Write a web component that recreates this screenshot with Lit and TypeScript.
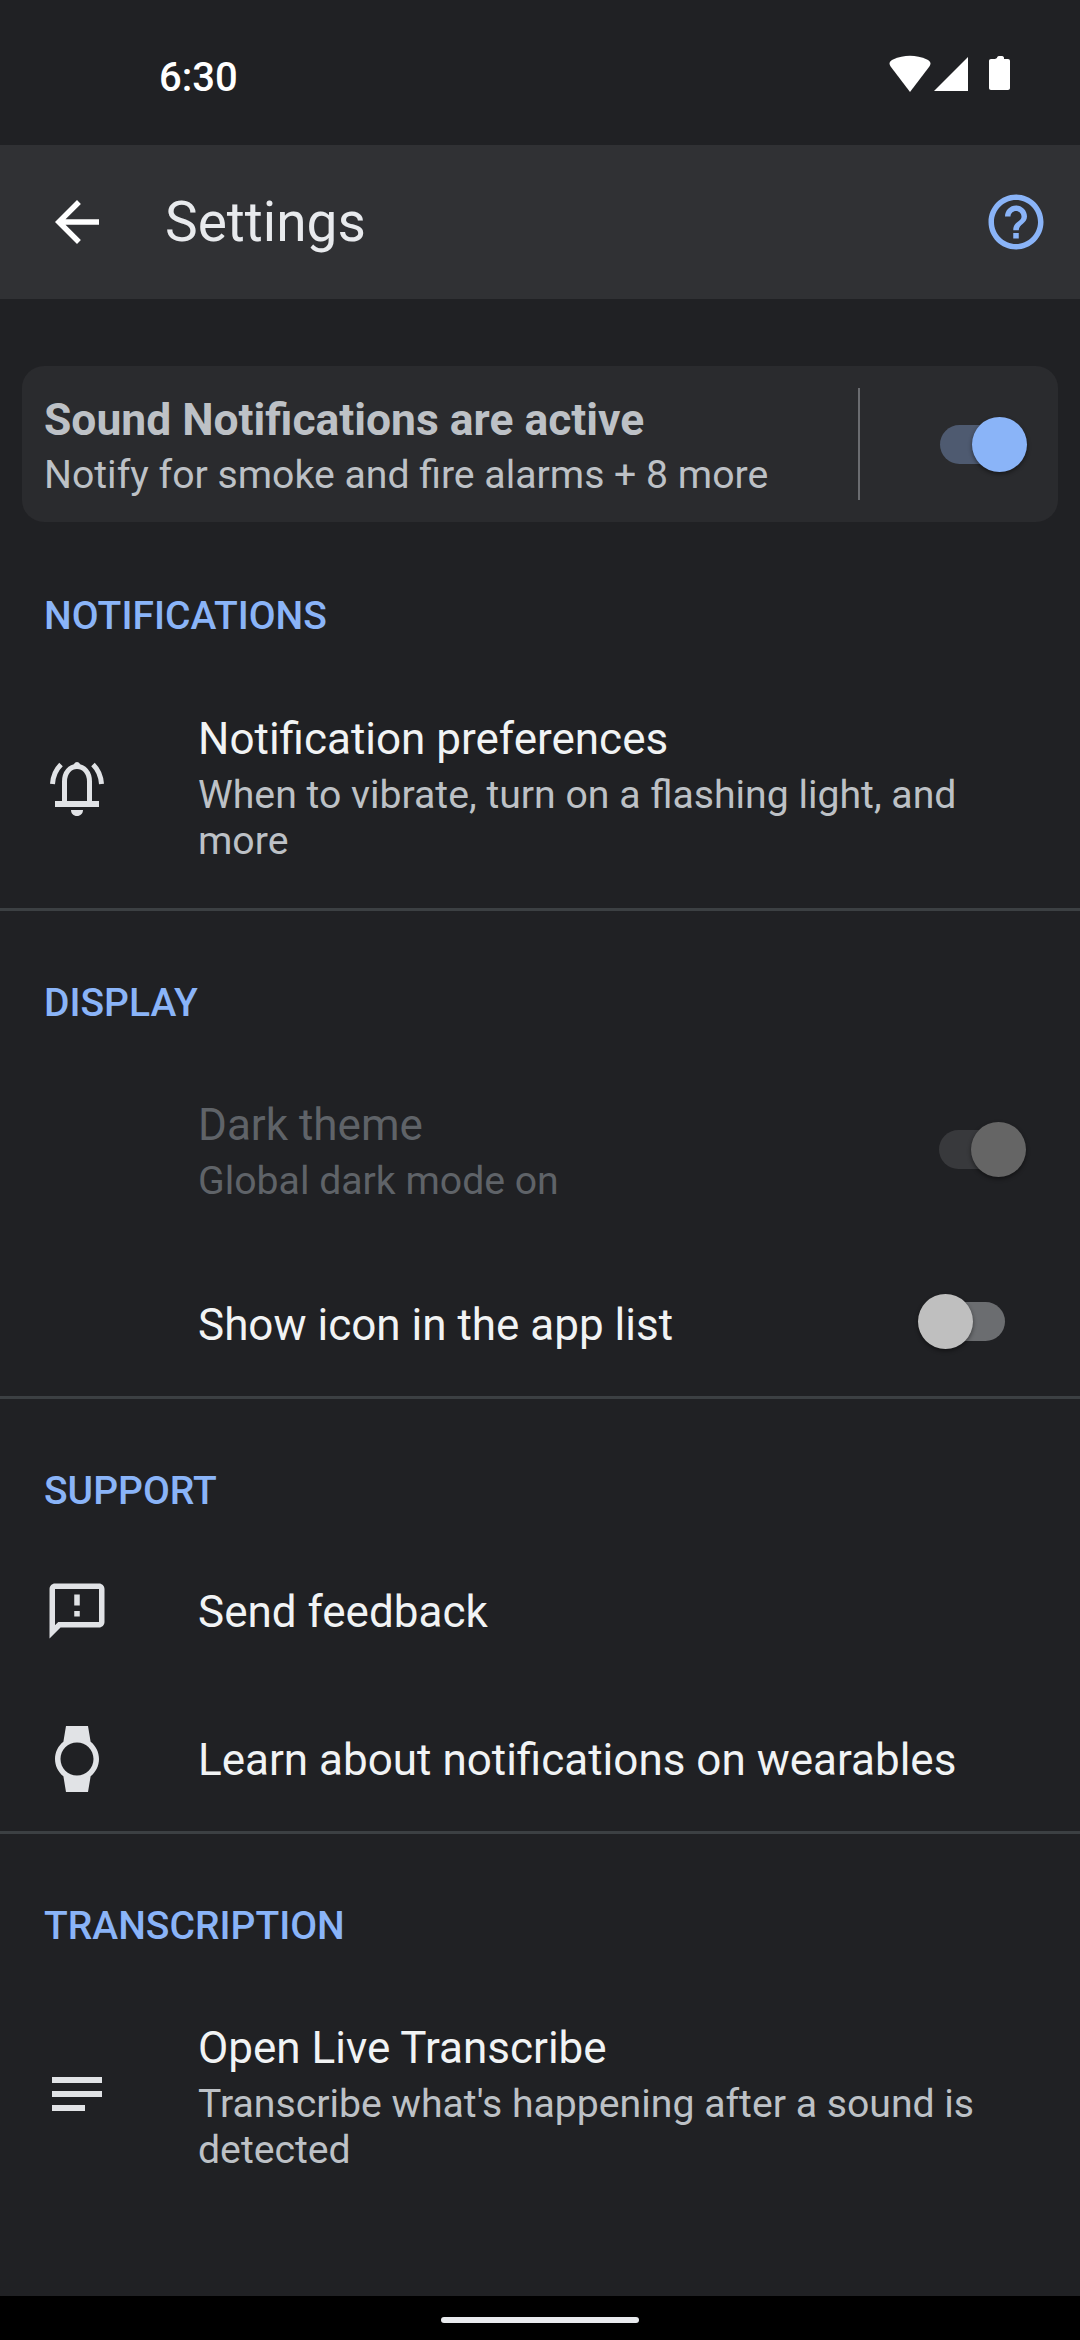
import { css, html, LitElement, svg } from "lit";
import { customElement, property } from "lit/decorators.js";

@customElement("app-toggle")
export class AppToggle extends LitElement {
  @property({ type: String }) mode = "on";

  render() {
    return html`<div class="toggle ${this.mode}">
      <div class="track"></div>
      <div class="thumb"></div>
    </div>`;
  }

  static styles = css`
    :host {
      display: block;
      flex: none;
    }
    .toggle {
      position: relative;
      width: 87px;
      height: 55px;
    }
    .track {
      position: absolute;
      top: 8px;
      width: 72px;
      height: 39px;
      border-radius: 20px;
    }
    .thumb {
      position: absolute;
      top: 0;
      width: 55px;
      height: 55px;
      border-radius: 50%;
      box-shadow: 0 2px 4px rgba(0, 0, 0, 0.45);
    }
    .on .track {
      left: 0;
      background: #4e5a70;
    }
    .on .thumb {
      right: 0;
      background: #8ab4f8;
    }
    .disabled .track {
      left: 0;
      background: #38393c;
    }
    .disabled .thumb {
      right: 0;
      background: #656565;
    }
    .off .track {
      right: 0;
      background: #6b6d70;
    }
    .off .thumb {
      left: 0;
      background: #bfbfbf;
    }
  `;
}

const bell = svg`<g fill="none" stroke="#e1e3e6" stroke-width="5">
    <path d="M44.5 68V48.5c0-9 5.5-15 12.5-15s12.5 6 12.5 15V68" />
    <path d="M35 71h44" stroke-width="6" />
    <path d="M32.5 51c.5-8 3.500-14.500 8.500-19.500" />
    <path d="M81.500 51c-.5-8-3.500-14.500-8.500-19.500" />
  </g>
  <path fill="#e1e3e6" d="M53.500 33.500c0-2.500 1.500-4.500 3.500-4.500s3.500 2 3.500 4.500zM51 77h12c0 3.500-2.500 6-6 6s-6-2.500-6-6z" />`;

const feedback = svg`<path fill="#e1e3e6" transform="scale(2.75)" d="M20 2H4c-1.100 0-1.990.9-1.990 2L2 22l4-4h14c1.100 0 2-.9 2-2V4c0-1.100-.9-2-2-2zm0 14H5.170L4 17.170V4h16v12zM11 12h2v2h-2zm0-6h2v4h-2z" />`;

const watch = svg`<path fill="#e1e3e6" transform="scale(2.75)" d="M20 12c0-2.540-1.190-4.810-3.040-6.270L16 0H8l-.95 5.730C5.190 7.190 4 9.450 4 12s1.190 4.810 3.050 6.270L8 24h8l.96-5.730C18.810 16.810 20 14.540 20 12zM6 12c0-3.310 2.690-6 6-6s6 2.690 6 6-2.690 6-6 6-6-2.690-6-6z" />`;

const lines = svg`<g fill="#e1e3e6">
    <rect x="8" y="13" width="50" height="6" />
    <rect x="8" y="27" width="50" height="6" />
    <rect x="8" y="41" width="33" height="6" />
  </g>`;

@customElement("app-root")
export class AppRoot extends LitElement {
  private icon(content: unknown, box = "0 0 66 66") {
    return html`<svg class="icon" viewBox=${box}>${content}</svg>`;
  }

  render() {
    return html`
      <div class="status">
        <span class="time">6:30</span>
        <svg class="status-icons" viewBox="0 0 124 40">
          <path fill="#fff" d="M21 37 L2 12 C-1 8 1 6 4 4.500 C15 -0.500 27 -0.500 38 4.500 C41 6 43 8 40 12 Z" />
          <path fill="#fff" d="M79 2 V36 H45 Z" />
          <path fill="#fff" d="M106 4 c0-1 .6-2 2-2 h3 c1.400 0 2 1 2 2 v1 h4 c1.200 0 2 .8 2 2 v27 c0 1.200-.8 2-2 2 h-17 c-1.200 0-2-.8-2-2 V7 c0-1.200 .8-2 2-2 h4 z" transform="translate(2 -1)" />
        </svg>
      </div>
      <div class="toolbar">
        <svg class="icon" viewBox="0 0 24 24">
          <path fill="#fff" d="M20 11H7.830l5.590-5.590L12 4l-8 8 8 8 1.410-1.410L7.830 13H20v-2z" />
        </svg>
        <span class="page-title">Settings</span>
        <svg class="icon help" viewBox="0 0 24 24">
          <path fill="#8ab4f8" d="M11 18h2v-2h-2v2zm1-16C6.480 2 2 6.480 2 12s4.480 10 10 10 10-4.480 10-10S17.520 2 12 2zm0 18c-4.410 0-8-3.590-8-8s3.590-8 8-8 8 3.590 8 8-3.590 8-8 8zm0-14c-2.210 0-4 1.790-4 4h2c0-1.100.9-2 2-2s2 .9 2 2c0 2-3 1.750-3 5h2c0-2.250 3-2.500 3-5 0-2.210-1.790-4-4-4z" />
        </svg>
      </div>

      <div class="main">
        <div class="card">
          <div class="card-text">
            <div class="card-title">Sound Notifications are active</div>
            <div class="summary">Notify for smoke and fire alarms + 8 more</div>
          </div>
          <div class="card-divider"></div>
          <app-toggle mode="on"></app-toggle>
        </div>

        <div class="section notifications">
          <div class="head">NOTIFICATIONS</div>
          <div class="row tall">
            ${this.icon(bell, "24 22 66 66")}
            <div class="text">
              <div class="title">Notification preferences</div>
              <div class="summary">When to vibrate, turn on a flashing light, and<br />more</div>
            </div>
          </div>
        </div>

        <div class="section display">
          <div class="head">DISPLAY</div>
          <div class="row dark">
            <div class="icon"></div>
            <div class="text">
              <div class="title muted">Dark theme</div>
              <div class="summary muted">Global dark mode on</div>
            </div>
            <app-toggle class="toggle-on" mode="disabled"></app-toggle>
          </div>
          <div class="row list">
            <div class="icon"></div>
            <div class="text"><div class="title">Show icon in the app list</div></div>
            <app-toggle class="toggle-off" mode="off"></app-toggle>
          </div>
        </div>

        <div class="section support">
          <div class="head">SUPPORT</div>
          <div class="row link">
            <svg class="icon" viewBox="0 0 66 66">${feedback}</svg>
            <div class="text"><div class="title">Send feedback</div></div>
          </div>
          <div class="row link">
            <svg class="icon" viewBox="0 0 66 66">${watch}</svg>
            <div class="text"><div class="title">Learn about notifications on wearables</div></div>
          </div>
        </div>

        <div class="section transcription">
          <div class="head">TRANSCRIPTION</div>
          <div class="row live">
            ${this.icon(lines)}
            <div class="text">
              <div class="title">Open Live Transcribe</div>
              <div class="summary">Transcribe what's happening after a sound is<br />detected</div>
            </div>
          </div>
        </div>
      </div>

      <div class="nav"><div class="home"></div></div>
    `;
  }

  static styles = css`
    :host {
      display: flex;
      flex-direction: column;
      height: 2340px;
      background: #202124;
      font-family: Roboto, "Noto Sans", sans-serif;
      color: #fff;
    }
    .status {
      height: 145px;
      flex: none;
      display: flex;
      align-items: center;
      justify-content: space-between;
      padding: 0 71px 0 159px;
      box-sizing: border-box;
    }
    .time {
      font-size: 40px;
      font-weight: 500;
      line-height: 42px;
      margin-top: 11px;
    }
    .status-icons {
      width: 124px;
      height: 40px;
      margin-top: 5px;
      margin-right: -4px;
    }
    .toolbar {
      height: 154px;
      flex: none;
      display: flex;
      align-items: center;
      padding: 0 33px 0 44px;
      background: #303134;
    }
    .icon {
      width: 66px;
      height: 66px;
      flex: none;
    }
    .help {
      margin-right: -2px;
    }
    .page-title {
      flex: 1;
      margin-left: 55px;
      font-size: 55px;
      color: #e8eaed;
    }
    .main {
      flex: 1;
    }
    .card {
      display: flex;
      align-items: center;
      height: 156px;
      margin: 67px 22px 0;
      padding: 0 31px 0 22px;
      box-sizing: border-box;
      border-radius: 22px;
      background: #2a2b2e;
    }
    .card-text {
      flex: 1;
      padding-top: 4px;
    }
    .card-title {
      font-size: 44.4px;
      line-height: 52px;
      font-weight: 700;
      color: #bdc1c6;
    }
    .card-divider {
      width: 2px;
      height: 112px;
      margin-right: 80px;
      background: #6a6c70;
    }
    .section {
      border-bottom: 3px solid #3c4043;
    }
    .section.notifications {
      padding-top: 61px;
    }
    .section.display,
    .section.support,
    .section.transcription {
      padding-top: 59px;
    }
    .section.transcription {
      border-bottom: none;
    }
    .head {
      display: flex;
      align-items: center;
      height: 66px;
      padding-left: 44px;
      font-size: 39px;
      font-weight: 500;
      color: #8ab4f8;
    }
    .row {
      display: flex;
      align-items: center;
      padding-left: 44px;
      gap: 89px;
    }
    .row.tall {
      padding-top: 62px;
      padding-bottom: 44px;
    }
    .row.dark {
      padding-top: 61px;
    }
    .row.dark app-toggle {
      margin-top: -3px;
    }
    .row.list {
      padding-top: 88px;
      padding-bottom: 38px;
    }
    .row.list app-toggle {
      margin-top: -8px;
    }
    .row.link {
      height: 148px;
      box-sizing: border-box;
    }
    .row.link .icon {
      margin-top: -3px;
    }
    .row.link:last-child {
      height: 145px;
      padding-top: 3px;
    }
    .support .head {
      margin-bottom: 14px;
    }
    .row.live {
      padding-top: 61px;
    }
    .text {
      flex: 1;
      margin-left: -1px;
    }
    .title {
      font-size: 44px;
      line-height: 56px;
      color: #f1f3f4;
    }
    .summary {
      margin-top: 5px;
      font-size: 39.2px;
      line-height: 46px;
      color: #bdc1c6;
    }
    .card .summary {
      margin-top: 6px;
    }
    .muted {
      color: #5f6368;
    }
    .toggle-on {
      margin-right: 54px;
    }
    .toggle-off {
      margin-right: 75px;
    }
    .nav {
      height: 44px;
      flex: none;
      display: flex;
      justify-content: center;
      padding-top: 21px;
      box-sizing: border-box;
      background: #000;
    }
    .home {
      width: 198px;
      height: 6px;
      border-radius: 3px;
      background: #e8eaed;
    }
  `;
}
